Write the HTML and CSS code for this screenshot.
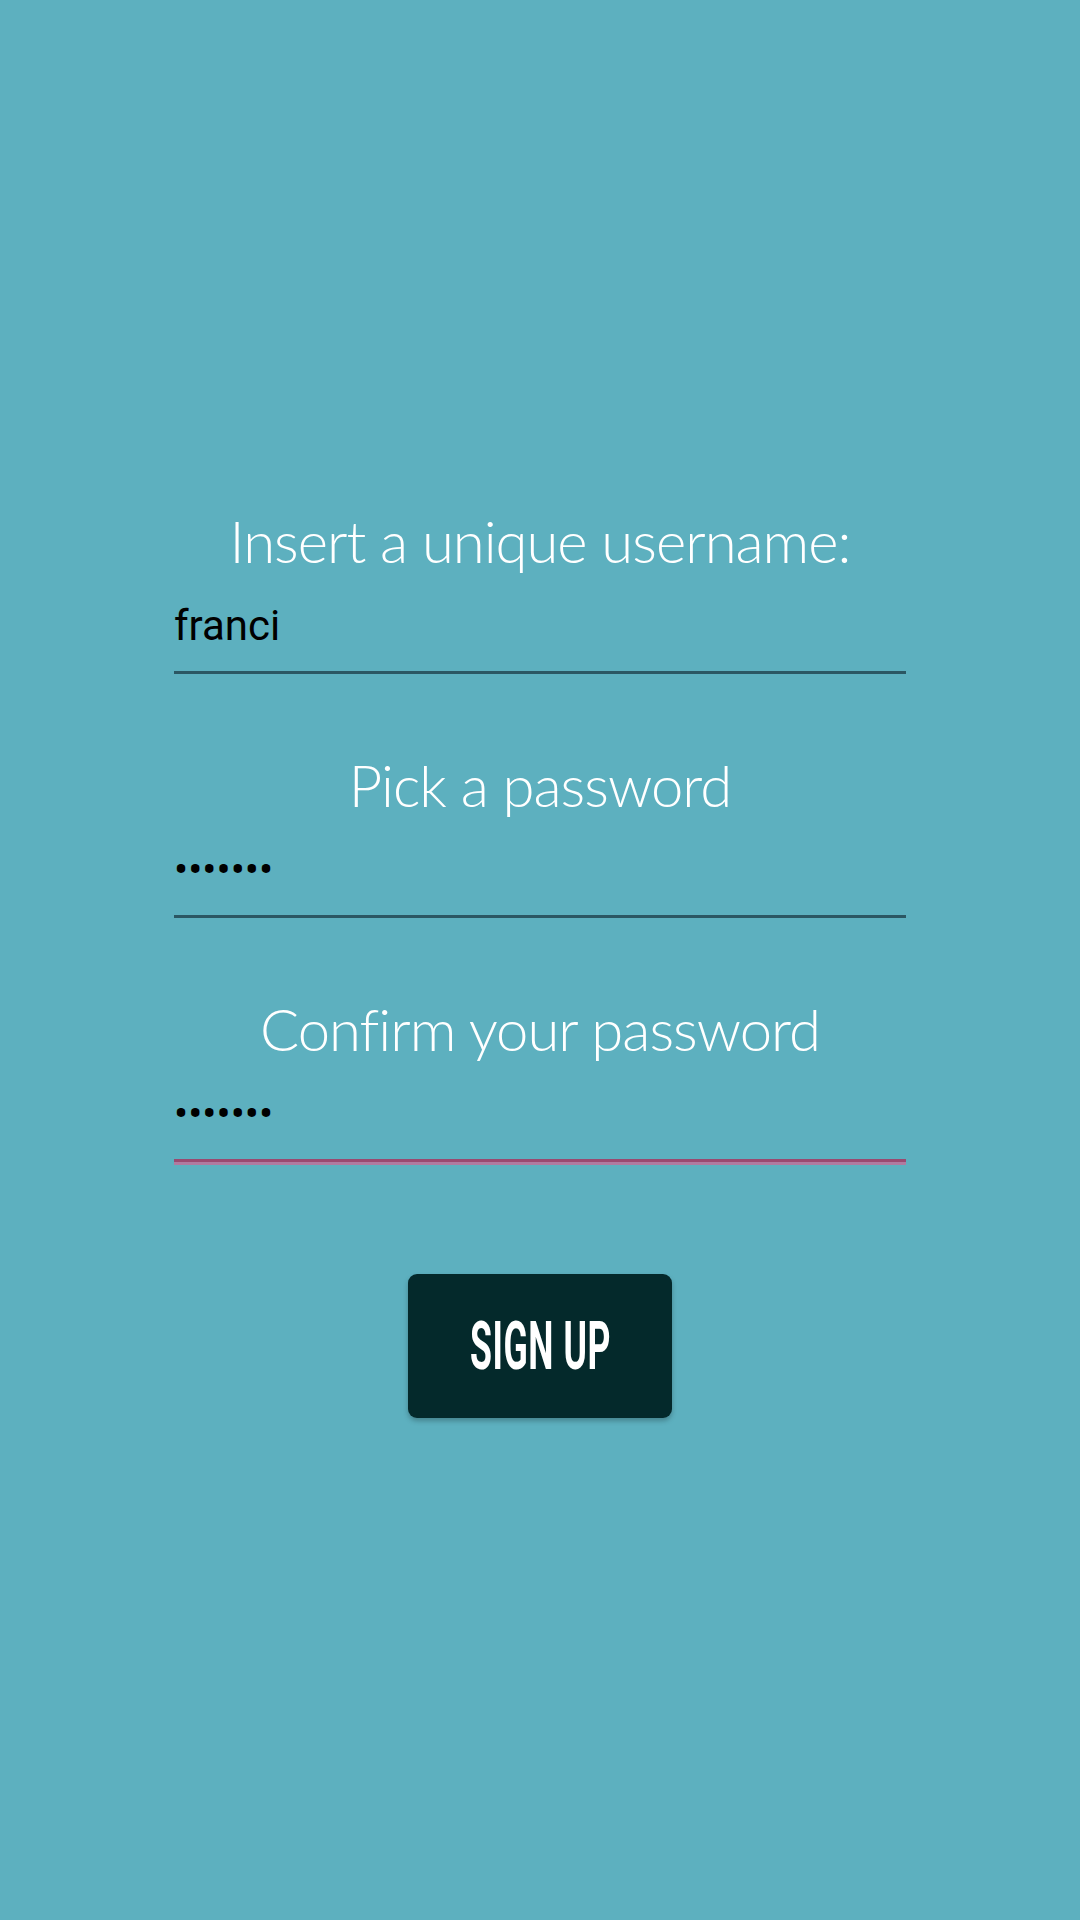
FILE: index.html
```html
<!DOCTYPE html>
<html lang="en">
<head>
<meta charset="utf-8">
<title>Sign up</title>
<link rel="stylesheet" href="styles.css">
</head>
<body>
<main class="screen">
  <form class="signup">
    <div class="field">
      <label class="label" for="user">Insert a unique username:</label>
      <input class="input" id="user" type="text" value="franci" readonly>
    </div>
    <div class="field">
      <label class="label" for="pw">Pick a password</label>
      <input class="input input-pw" id="pw" type="password" value="abcdefg" readonly>
    </div>
    <div class="field">
      <label class="label" for="pw2">Confirm your password</label>
      <input class="input input-pw input-active" id="pw2" type="password" value="abcdefg" readonly>
    </div>
    <div class="actions">
      <button class="btn" type="button"><span class="btn-text">SIGN UP</span></button>
    </div>
  </form>
</main>
</body>
</html>
```
FILE: styles.css
```css
html, body {
  margin: 0;
  padding: 0;
}
body {
  background: #5db0bf;
  width: 1080px;
  height: 1920px;
  overflow: hidden;
}
.screen {
  display: flex;
  justify-content: center;
  padding-top: 498px;
}
.signup {
  width: 732px;
  display: flex;
  flex-direction: column;
}
.field {
  display: flex;
  flex-direction: column;
  height: 244px;
}
.label {
  font-family: "Lato", "Inter", sans-serif;
  font-weight: 300;
  font-size: 58px;
  line-height: 80px;
  letter-spacing: -1px;
  padding-top: 3px;
  color: #ffffff;
  text-align: center;
}
.input {
  display: block;
  box-sizing: border-box;
  width: 732px;
  height: 93px;
  margin: 0;
  padding: 0 0 1px 0;
  border: 0;
  border-bottom: 3px solid #2b5763;
  background: transparent;
  font-family: "Roboto", sans-serif;
  font-size: 42px;
  color: #000000;
  outline: none;
}
.input-active {
  border-bottom: 3px solid #9a4a70;
  box-shadow: 0 3px 0 #b07ba0;
}
.actions {
  display: flex;
  justify-content: center;
  padding-top: 44px;
}
.btn {
  width: 264px;
  height: 144px;
  background: #04292b;
  border: 0;
  border-radius: 9px;
  box-shadow: 0 3px 5px rgba(0,0,0,0.25);
  display: flex;
  align-items: center;
  justify-content: center;
  padding: 0;
}
.btn-text {
  display: inline-block;
  font-family: "Roboto", sans-serif;
  font-weight: 700;
  font-size: 66px;
  color: #ffffff;
  transform: scaleX(0.54);
  letter-spacing: 1px;
}
```
